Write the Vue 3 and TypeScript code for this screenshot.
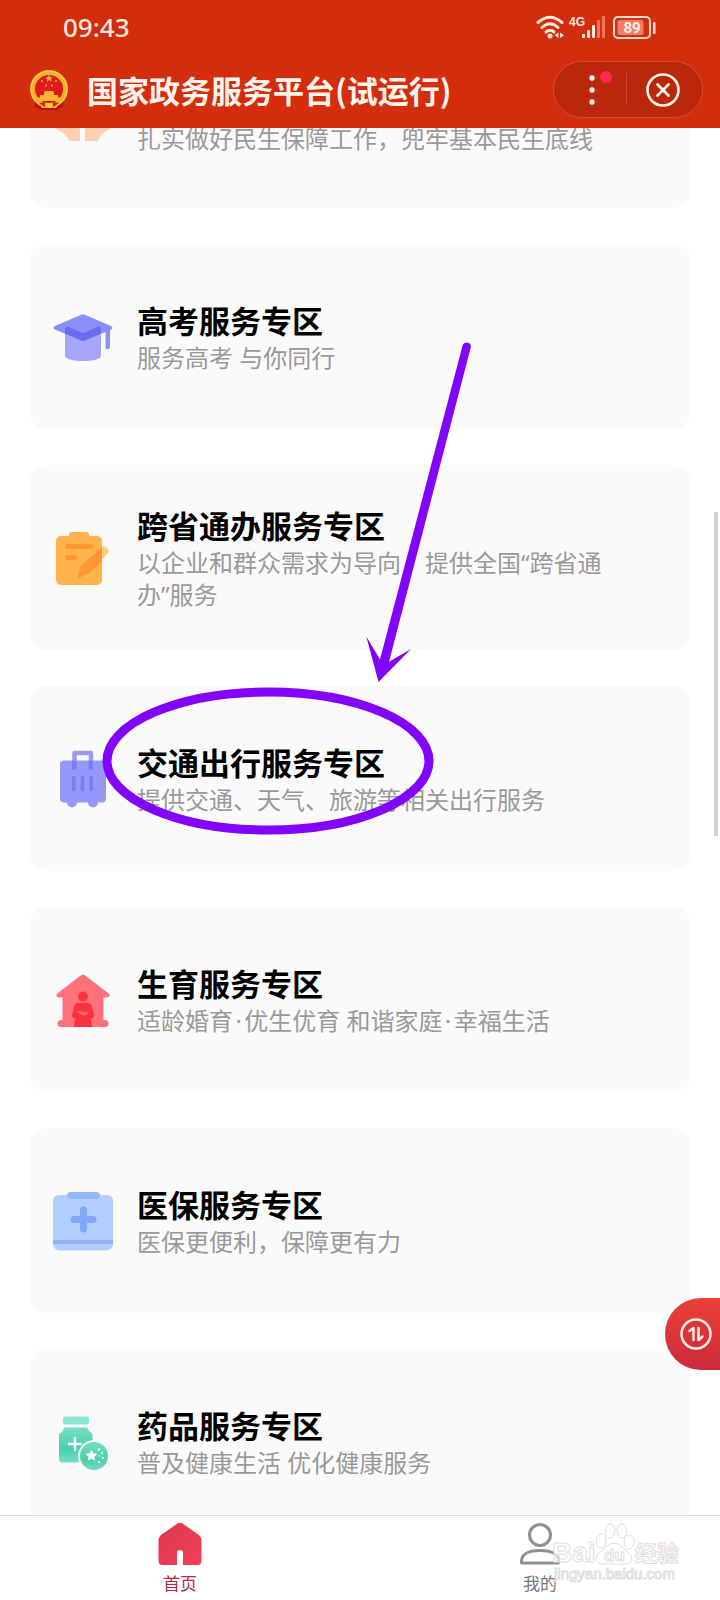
<script setup lang="ts">
interface Zone {
  id: string
  title: string
  desc: string
}

const zones: Zone[] = [
  { id: 'exam', title: '高考服务专区', desc: '服务高考 与你同行' },
  { id: 'province', title: '跨省通办服务专区', desc: '以企业和群众需求为导向，提供全国“跨省通办”服务' },
  { id: 'travel', title: '交通出行服务专区', desc: '提供交通、天气、旅游等相关出行服务' },
  { id: 'birth', title: '生育服务专区', desc: '适龄婚育\u200a·\u200a优生优育 和谐家庭\u200a·\u200a幸福生活' },
  { id: 'medical', title: '医保服务专区', desc: '医保更便利，保障更有力' },
  { id: 'drug', title: '药品服务专区', desc: '普及健康生活 优化健康服务' },
]
</script>

<template>
  <div class="page">
    <header class="header">
      <div class="status">
        <span class="time">09:43</span>
        <svg class="indicators" width="122" height="30" viewBox="0 0 122 30">
          <g fill="none" stroke="#ffe9dd" stroke-width="3" stroke-linecap="round">
            <path d="M3 10.500Q15 0 27 10.500" />
            <path d="M7 15.500Q15 8 23 15.500" />
            <path d="M11 20Q15 16.500 19 20" />
          </g>
          <circle cx="15" cy="24" r="2.500" fill="#ffe9dd" />
          <path d="M23.500 20.500v5.500l-4-2.700zM25 20.500v5.500l4-2.700z" fill="#ffe9dd" />
          <text x="34" y="14" class="network">4G</text>
          <g fill="#ffe9dd">
            <rect x="47" y="22" width="3" height="4" rx="1" />
            <rect x="52" y="18" width="3" height="8" rx="1" />
            <rect x="57" y="13" width="3" height="13" rx="1" />
          </g>
          <g fill="#ee7759">
            <rect x="62" y="8" width="3" height="18" rx="1" />
            <rect x="67" y="4" width="3" height="22" rx="1" />
          </g>
          <rect x="79" y="5" width="36" height="21" rx="4" fill="none" stroke="#ffd9c9" stroke-width="2" />
          <rect x="82.500" y="8" width="26" height="15" rx="2" fill="#ee7c66" />
          <rect x="118" y="10" width="2.500" height="12" rx="1" fill="#ffd9c9" />
          <text x="97" y="21" text-anchor="middle" class="level">89</text>
        </svg>
      </div>
      <div class="bar">
        <svg class="emblem" width="40" height="42" viewBox="0 0 40 42">
          <path d="M5 32l7 2h16l7-2-1 6-6 3H12l-6-3z" fill="#b9150c" />
          <circle cx="20" cy="20" r="16.500" fill="#e01b1b" stroke="#f3b02c" stroke-width="5" />
          <circle cx="20" cy="20" r="18" fill="none" stroke="#ffd65a" stroke-width="1" />
          <path d="M20 5.500l1 2.700h2.900l-2.300 1.700.9 2.800-2.500-1.700-2.500 1.700.9-2.800-2.300-1.700H19z" fill="#ffb52f" />
          <g fill="#ffb52f">
            <circle cx="13" cy="12" r="1" /><circle cx="27" cy="12" r="1" />
            <circle cx="17" cy="16.500" r="1" /><circle cx="23" cy="16.500" r="1" />
            <path d="M15 24l1-2h8l1 2v2h4v3H11v-3h4zM7 28.500h26L30 32H10z" />
            <path d="M8 32q6 5 12 2 6 3 12-2l-5 7h-3l-4-2-4 2h-3z" />
          </g>
          <path d="M10 34l6-1v5zM30 34l-6-1v5z" fill="#d6200f" />
          <circle cx="20" cy="36.500" r="2.500" fill="#ffcb3d" />
        </svg>
        <h1 class="name">国家政务服务平台(试运行)</h1>
        <div class="capsule">
          <button class="cap-btn" aria-label="更多">
            <svg width="72" height="55" viewBox="0 0 72 55">
              <g fill="#fff4e8">
                <circle cx="38" cy="16" r="2.700" /><circle cx="38" cy="28" r="2.700" /><circle cx="38" cy="40" r="2.700" />
              </g>
              <circle cx="52" cy="15" r="6" fill="#fc2850" />
            </svg>
          </button>
          <span class="divider"></span>
          <button class="cap-btn" aria-label="关闭">
            <svg width="75" height="55" viewBox="0 0 75 55" fill="none" stroke="#fff4e8">
              <circle cx="36" cy="28" r="15.500" stroke-width="2.600" />
              <path d="M30.500 22.500l11 11M41.500 22.500l-11 11" stroke-width="2.800" stroke-linecap="round" />
            </svg>
          </button>
        </div>
      </div>
    </header>

    <main class="content">
      <a href="#livelihood" class="card cut">
        <svg class="icon" width="60" height="60" viewBox="0 0 60 60">
          <path d="M0 36H27V58H16Q14 51 3 46zM60 36H32V58H45Q47 51 57 46z" fill="#fdcfb2" />
        </svg>
        <span class="desc">扎实做好民生保障工作，兜牢基本民生底线</span>
      </a>

      <a v-for="zone in zones" :key="zone.id" :href="'#' + zone.id" class="card">
        <svg class="icon" width="60" height="60" viewBox="0 0 60 60">
          <g v-if="zone.id === 'exam'">
            <path d="M12 21H48V49Q46 54 30 54T12 49z" fill="#a5a8fa" />
            <path d="M27.500 8Q30 6.500 32.500 8L58 19Q61 21 58 22.500L57 23V40Q57 42 54.700 42T52.500 40V25L32 33.500Q30 34.500 28 33.500L2 22.500Q-1 21 2 19z" fill="#8a8ffb" />
            <path d="M12 21Q13 19 16 20L28 25.500Q30 26.500 32 25.500L44 20Q47 19 48 21V26.500L32 33.500Q30 34.500 28 33.500L12 26.500z" fill="#696df2" />
          </g>
          <g v-else-if="zone.id === 'province'">
            <path d="M22 49L28 37 48 19Q51 17 54 20T55 25L36 45z" fill="#ffcb7d" />
            <rect x="3" y="8" width="46" height="49" rx="5" fill="#ffb34a" />
            <rect x="16" y="4" width="20" height="9" rx="3" fill="#ffb34a" />
            <g fill="#ff9630">
              <rect x="12" y="16" width="28" height="5" rx="2.500" />
              <rect x="12" y="27" width="12" height="5" rx="2.500" />
              <path d="M49 19V33L36 45 26 50Q23 51 25 48L28 38z" />
            </g>
          </g>
          <g v-else-if="zone.id === 'travel'">
            <rect x="7" y="11.500" width="46" height="42" rx="4" fill="#9597f9" />
            <circle cx="19" cy="53.500" r="5" fill="#9597f9" /><circle cx="40" cy="53.500" r="5" fill="#9597f9" />
            <path d="M21.500 12V4H38V12" fill="none" stroke="#9a9cf1" stroke-width="4.500" stroke-linejoin="round" />
            <g fill="#797ced">
              <rect x="19" y="11.500" width="4.500" height="9" rx="1" /><rect x="35.500" y="11.500" width="4.500" height="9" rx="1" />
              <rect x="19" y="27" width="3.500" height="15" rx="1" /><rect x="27.700" y="27" width="3.500" height="15" rx="1" /><rect x="36.500" y="27" width="3.500" height="15" rx="1" />
            </g>
          </g>
          <g v-else-if="zone.id === 'birth'">
            <path d="M27 6Q30 3.500 33 6L55 23Q59 27 54 27.500H50.500V50H52Q55.500 50 55.500 53.500T52 57H8Q4.500 57 4.500 53.500T8 50H9.500V27.500H6Q1 27 5 23z" fill="#ff727c" />
            <circle cx="30" cy="26.500" r="5" fill="#fc3141" />
            <path d="M25 33H35Q38 33 39 37L41 45Q41 48 38 49L39 57H21L22 49Q19 48 19 45L21 37Q22 33 25 33z" fill="#fc3141" />
            <path d="M24 42Q27 40 31 42Q34 43 36 41Q35 46 29 45Z" fill="#ff6b75" />
          </g>
          <g v-else-if="zone.id === 'medical'">
            <path d="M6 4H54Q60 4 60 10V49H0V10Q0 4 6 4z" fill="#b2cefe" />
            <path d="M0 53H60Q59 59.500 53 59.500H7Q1 59.500 0 53z" fill="#b2cefe" />
            <rect y="49" width="60" height="4" fill="#8fb4fc" />
            <rect x="14" y="1" width="33" height="7" rx="3.500" fill="#93b8fa" />
            <path d="M30.500 19V38M21 28.500H40" stroke="#80a7fa" stroke-width="7" stroke-linecap="round" />
          </g>
          <g v-else>
            <linearGradient id="mint" x1="0" y1="0" x2="0" y2="1">
              <stop offset="0" stop-color="#77dfc2" /><stop offset="0.600" stop-color="#4acfad" /><stop offset="1" stop-color="#72e0c4" />
            </linearGradient>
            <rect x="10" y="4.500" width="26" height="8" rx="2" fill="#8ae6cf" />
            <path d="M11 15.500H34Q36 20 39.500 22V50.500H9Q6 50.500 6 47V22Q10 20 11 15.500z" fill="url(#mint)" />
            <path d="M22 25V39M15 32H29" stroke="#fff" stroke-width="2.500" />
            <circle cx="41" cy="44" r="15" fill="url(#mint)" stroke="#fafafa" stroke-width="2" />
            <g fill="#fff">
              <path d="M38.500 37.500l1.900 3.700 4 .6-2.900 2.900.7 4-3.700-1.900-3.700 1.900.7-4-2.900-2.900 4-.6z" />
              <circle cx="46" cy="37.500" r="1.300" /><circle cx="49" cy="41" r="1" /><circle cx="50" cy="46" r="1.300" /><circle cx="46" cy="50" r="1.300" /><circle cx="46" cy="44" r="0.800" />
            </g>
          </g>
        </svg>
        <span class="words">
          <strong class="title">{{ zone.title }}</strong>
          <span class="desc">{{ zone.desc }}</span>
        </span>
      </a>
    </main>

    <nav class="tabs">
      <a href="#home" class="tab active">
        <svg width="44" height="44" viewBox="0 0 44 44">
          <linearGradient id="home" x1="0" y1="0" x2="1" y2="1">
            <stop offset="0" stop-color="#da3a4b" /><stop offset="1" stop-color="#f34059" />
          </linearGradient>
          <path d="M19.500 1.500Q22 0 24.500 1.500L41 13Q43.500 15 43.500 18V39Q43.500 43 39.500 43H25V31Q25 28 22 28T19 31V43H4.500Q.5 43 .5 39V18Q.5 15 3 13z" fill="url(#home)" />
        </svg>
        <span>首页</span>
      </a>
      <a href="#mine" class="tab">
        <svg width="44" height="44" viewBox="0 0 44 44" fill="none" stroke="#909090" stroke-width="3">
          <circle cx="22" cy="13" r="10.500" />
          <path d="M3.500 41Q2.500 28.500 22 28.500T40.500 41z" stroke-linejoin="round" />
        </svg>
        <span>我的</span>
      </a>
    </nav>

    <button class="float" aria-label="切换">
      <svg width="32" height="32" viewBox="0 0 32 32" fill="none" stroke="#ffeade" stroke-width="2.500" stroke-linecap="round" stroke-linejoin="round">
        <circle cx="16" cy="16" r="14.500" />
        <path d="M9.500 13L13.500 10V22M18.500 10V22L22.500 18.500" />
      </svg>
    </button>
    <span class="thumb"></span>

    <svg class="marks" width="350" height="500" viewBox="100 340 350 500">
      <ellipse cx="268" cy="761" rx="161" ry="69" fill="none" stroke="#8204fd" stroke-width="9" />
      <path d="M462.700 345Q464 342 467.500 342.500T470.800 347.300L389 661.700 411 649 378.500 682 366.300 636.500 380 659.500z" fill="#8204fd" />
    </svg>

    <svg class="watermark" width="134" height="66" viewBox="0 0 134 66" fill="#fff" fill-opacity="0.700" stroke="#dedede" stroke-width="1">
      <text x="0" y="41" class="mark-brand">Bai</text>
      <path d="M62 22Q68 22 72 28L79 34Q82 42 74 43H50Q42 42 45 34L52 28Q56 22 62 22z" />
      <ellipse cx="49" cy="20" rx="5" ry="7" /><ellipse cx="58" cy="10" rx="5" ry="7" />
      <ellipse cx="70" cy="10" rx="5" ry="7" /><ellipse cx="77" cy="21" rx="5" ry="7" />
      <text x="52" y="40" class="mark-du">du</text>
      <text x="83" y="40" class="mark-cn">经验</text>
      <text x="2" y="58" class="mark-url">jingyan.baidu.com</text>
    </svg>
  </div>
</template>

<style>
body {
  margin: 0;
  background: #fff;
}
</style>

<style scoped>
.page {
  position: relative;
  display: flex;
  flex-direction: column;
  height: 100vh;
  overflow: hidden;
  background: #fff;
  font-family: "Noto Sans", "Noto Sans CJK SC", sans-serif;
}
.header {
  flex: none;
  background: #d32d0e;
  color: #fff4ec;
}
.status {
  display: flex;
  align-items: center;
  justify-content: space-between;
  height: 54px;
  padding: 0 63px;
}
.time {
  font-size: 26px;
  line-height: 32px;
  font-weight: 500;
  color: #ffe9dd;
}
.network {
  font: 700 12px "Liberation Sans", sans-serif;
  fill: #ffe9dd;
}
.level {
  font: 700 15px Roboto, sans-serif;
  fill: #fff0e6;
}
.bar {
  display: flex;
  align-items: center;
  box-sizing: border-box;
  height: 74px;
  padding: 0 17px 2px 29px;
}
.name {
  flex: 1;
  margin: 0 0 0 18px;
  font-family: "Noto Sans CJK SC", sans-serif;
  font-size: 31px;
  line-height: 42px;
  font-weight: 700;
  white-space: nowrap;
}
.capsule {
  display: flex;
  align-items: center;
  box-sizing: border-box;
  height: 57px;
  border: 1px solid #dc4a30;
  border-radius: 29px;
  background: #bb270b;
  margin-bottom: 2px;
}
.cap-btn {
  padding: 0;
  border: 0;
  background: none;
}
.cap-btn svg {
  display: block;
}
.divider {
  width: 1px;
  height: 32px;
  background: #cf432b;
}
.content {
  flex: 1;
  min-height: 0;
  overflow: hidden;
  display: flex;
  flex-direction: column;
  gap: 36px;
  padding: 0 30px;
}
.card {
  flex: none;
  display: flex;
  align-items: center;
  gap: 24px;
  box-sizing: border-box;
  min-height: 185px;
  padding: 0 74px 0 23px;
  border-radius: 16px;
  background: #fafafa;
  text-decoration: none;
}
.cut {
  align-items: flex-end;
  height: 80px;
  min-height: 0;
  padding-bottom: 53px;
  border-radius: 0 0 16px 16px;
}
.cut .icon {
  margin-bottom: 12px;
}
.icon {
  flex: none;
}
.words {
  display: flex;
  flex-direction: column;
}
.title {
  font-size: 31px;
  line-height: 42px;
  font-weight: 700;
  color: #000;
}
.desc {
  font-size: 24px;
  line-height: 32px;
  color: #999;
}
.tabs {
  flex: none;
  display: flex;
  height: 84px;
  border-top: 1px solid #dcdcdc;
  background: #fff;
}
.tab {
  flex: 1;
  display: flex;
  flex-direction: column;
  align-items: center;
  gap: 8px;
  padding-top: 6px;
  font-size: 17px;
  line-height: 20px;
  color: #777;
  text-decoration: none;
}
.active {
  color: #b02a42;
}
.float {
  position: absolute;
  right: 0;
  bottom: 230px;
  display: flex;
  align-items: center;
  width: 55px;
  height: 72px;
  padding: 0 0 0 15px;
  border: 0;
  border-radius: 36px 0 0 36px;
  background: linear-gradient(#ea4038, #cc2a3c);
}
.thumb {
  position: absolute;
  top: 512px;
  right: 2px;
  width: 4px;
  height: 324px;
  background: #d2d2d2;
}
.marks {
  position: absolute;
  top: 340px;
  left: 100px;
  overflow: visible;
  pointer-events: none;
}
.watermark {
  position: absolute;
  right: 34px;
  bottom: 13px;
  pointer-events: none;
}
.mark-brand {
  font: 700 28px "Liberation Sans", sans-serif;
}
.mark-du {
  font: 700 17px "Liberation Sans", sans-serif;
}
.mark-cn {
  font: 700 22px "Noto Sans CJK SC", sans-serif;
}
.mark-url {
  font: 15px "Liberation Sans", sans-serif;
}
</style>
